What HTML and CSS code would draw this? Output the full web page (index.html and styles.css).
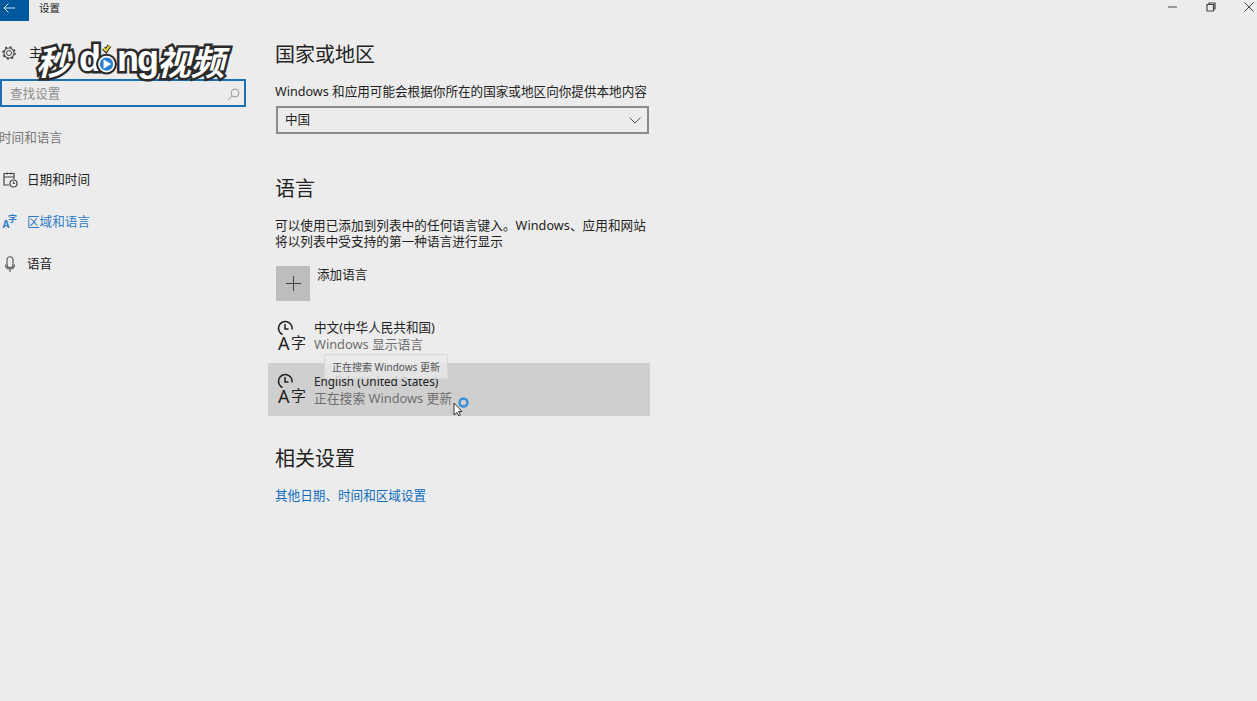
FILE: index.html
```html
<!DOCTYPE html>
<html lang="zh-CN">
<head>
  <meta charset="UTF-8" />
  <title>设置</title>
  <link rel="stylesheet" href="styles.css">
</head>
<body>
  <div class="titlebar">
    <div class="back">
      <svg width="14" height="12" viewBox="0 0 14 12" fill="none" stroke="#d5e3ef" stroke-width="1"><path d="M13 6H2M6.500 1.500 2 6l4.500 4.500"/></svg>
    </div>
    <div class="app-name">设置</div>
    <div class="win-buttons">
      <svg class="win-btn" width="10" height="10" viewBox="0 0 10 10" fill="none" stroke="#444"><path d="M0 5h9"/></svg>
      <svg class="win-btn" width="10" height="10" viewBox="0 0 10 10" fill="none" stroke="#444" stroke-width="1.200"><path d="M1 2.500h6.500V9H1zM3 2.500V1h6v6H7.500"/></svg>
      <svg class="win-btn" width="10" height="10" viewBox="0 0 10 10" fill="none" stroke="#444"><path d="M.5.500l9 9M9.500.500l-9 9"/></svg>
    </div>
  </div>

  <div class="main">
    <aside class="sidebar">
      <div class="home">
        <svg width="14" height="14" viewBox="0 0 14 14" fill="none" stroke="#444"><circle cx="7" cy="7" r="2.500"/><circle cx="7" cy="7" r="5" stroke-width="1.100"/><circle cx="7" cy="7" r="6" stroke-width="1.600" stroke-dasharray="2 2.710"/></svg>
        <span>主页</span>
      </div>
      <div class="search">
        <span>查找设置</span>
        <svg width="13" height="13" viewBox="0 0 13 13" fill="none" stroke="#999"><circle cx="8" cy="5" r="4"/><path d="M5.200 7.800 1 12"/></svg>
      </div>
      <div class="group-title">时间和语言</div>
      <nav class="nav">
        <div class="nav-item">
          <svg width="16" height="16" viewBox="0 0 16 16" fill="none" stroke="#444" stroke-width="1.200"><path d="M7 13H2V1.500h10V7M2 5h10M5 .5v2M9 .5v2"/><circle cx="11.500" cy="11.500" r="3.500"/><path d="M11.500 9.500v2h1.500"/></svg>
          <span>日期和时间</span>
        </div>
        <div class="nav-item active">
          <svg width="16" height="16" viewBox="0 0 16 16" class="nav-lang"><text class="nav-a" x="0.500" y="14">A</text><text class="nav-zi" x="6" y="8">字</text></svg>
          <span>区域和语言</span>
        </div>
        <div class="nav-item">
          <svg width="16" height="16" viewBox="0 0 16 16" fill="none" stroke="#555" stroke-width="1.100"><rect x="5" y="0.700" width="6" height="11" rx="3"/><path d="M3.500 8.500c0 6 9 6 9 0M8 13.500V16"/></svg>
          <span>语音</span>
        </div>
      </nav>
    </aside>

    <section class="content">
      <h2 class="first">国家或地区</h2>
      <p class="desc">Windows 和应用可能会根据你所在的国家或地区向你提供本地内容</p>
      <div class="select">
        <span>中国</span>
        <svg width="12" height="7" viewBox="0 0 12 7" fill="none" stroke="#555"><path d="M.5.500 6 6l5.500-5.500"/></svg>
      </div>

      <h2 class="lang-title">语言</h2>
      <p class="desc wrap">可以使用已添加到列表中的任何语言键入。Windows、应用和网站将以列表中受支持的第一种语言进行显示</p>

      <div class="add-lang">
        <div class="add-box">
          <svg width="15" height="15" viewBox="0 0 15 15" fill="none" stroke="#444"><path d="M7.500 0v15M0 7.500h15"/></svg>
        </div>
        <span>添加语言</span>
      </div>

      <div class="lang-row first-row">
        <svg class="lang-icon" width="30" height="33" viewBox="0 0 30 33" fill="none" stroke="#222" stroke-width="1.500"><path d="M6.500 15.500A6.800 6.800 0 1 1 16 10.500"/><path d="M9 5v5h3.500"/><text x="2" y="31">A</text><text x="15" y="29">字</text></svg>
        <div>
          <div class="lang-name">中文(中华人民共和国)</div>
          <div class="lang-sub">Windows 显示语言</div>
        </div>
      </div>
      <div class="lang-row selected">
        <svg class="lang-icon" width="30" height="33" viewBox="0 0 30 33" fill="none" stroke="#222" stroke-width="1.500"><path d="M6.500 15.500A6.800 6.800 0 1 1 16 10.500"/><path d="M9 5v5h3.500"/><text x="2" y="31">A</text><text x="15" y="29">字</text></svg>
        <div class="lang-text">
          <div class="lang-name lang-en">English (United States)</div>
          <div class="lang-sub">正在搜索 Windows 更新</div>
        </div>
        <div class="tooltip">正在搜索 Windows 更新</div>
        <svg class="cursor" width="18" height="20" viewBox="0 0 18 20"><circle cx="12.500" cy="5.500" r="4" fill="none" stroke="#3a8fd6" stroke-width="2.500"/><path d="M3 6v12l3-2.500 2 3.500 1.500-1-2-3.500H11z" fill="#fff" stroke="#333"/></svg>
      </div>

      <h2 class="related-title">相关设置</h2>
      <a class="link">其他日期、时间和区域设置</a>
    </section>
  </div>

  <div class="watermark"><span class="wm-cn">秒</span><span class="wm-en">d</span><span class="wm-play"><svg width="21" height="31" viewBox="0 0 25 37"><path d="M9 5l3 3 4-6" fill="none" stroke="#2b2b2b" stroke-width="5"/><path d="M9 5l3 3 4-6" fill="none" stroke="#e8d23a" stroke-width="2.500"/><circle cx="12.500" cy="24" r="12.500" fill="#2b2b2b"/><circle cx="12.500" cy="24" r="10" fill="#fff"/><circle cx="12.500" cy="24" r="8" fill="#2f7fd0"/><path d="M9 18.500v11l9-5.500z" fill="#fff"/></svg></span><span class="wm-en">ng</span><span class="wm-cn wm-last">视频</span></div>
</body>
</html>
```

FILE: styles.css
```css
* { box-sizing: border-box; }
html, body { margin: 0; height: 100%; }
body { background: #ececec; color: #222; font-family: "Noto Sans", "Noto Sans CJK SC", sans-serif; font-size: 12.6px; line-height: 16px; overflow: hidden; position: relative; }
svg { overflow: visible; }

.titlebar { display: flex; align-items: center; height: 21px; }
.back { width: 29px; height: 21px; background: #00599d; display: flex; align-items: center; padding-left: 2px; padding-bottom: 6px; }
.app-name { margin-left: 10px; font-size: 10.5px; padding-bottom: 6px; }
.win-buttons { margin-left: auto; display: flex; gap: 28px; padding: 0 3px 8px 0; }

.main { display: flex; }
.sidebar { width: 276px; flex: none; }
.home { display: flex; align-items: center; gap: 13px; height: 24px; margin-top: 20px; padding-left: 2px; }
.search { width: 246px; height: 28px; margin-top: 14px; border: 2px solid #1a6fb5; display: flex; align-items: center; justify-content: space-between; padding: 2px 4px 0 8px; color: #8f8f8f; }
.group-title { margin-top: 23px; margin-left: -1px; color: #777; }
.nav { margin-top: 13px; }
.nav-item { display: flex; align-items: center; gap: 9px; height: 42px; padding-left: 2px; }
.nav-item.active { color: #2e7cc4; }
.nav-lang text { fill: #2e7cc4; font-weight: 700; }
.nav-a { font-size: 10px; }
.nav-zi { font-size: 9px; }

.content { flex: none; width: 373px; }
h2 { font-size: 20px; font-weight: 400; line-height: 28px; margin: 0 0 0 -1px; color: #222; }
h2.first { margin-top: 20px; }
p { margin: 0 0 0 -1px; }
.desc { margin-top: 15px; white-space: nowrap; }
.desc.wrap { white-space: normal; letter-spacing: .07px; }
.select { display: flex; align-items: center; justify-content: space-between; height: 28px; margin-top: 6px; border: 2px solid #8b8b8b; padding: 0 6px 0 7px; }
.lang-title { margin-top: 41px; }
.add-lang { display: flex; align-items: flex-start; gap: 7px; margin-top: 16px; height: 34px; }
.add-box { width: 34px; height: 35px; background: #bdbdbd; display: flex; align-items: center; justify-content: center; }
.add-lang span { margin-top: 1px; }

.lang-row { display: flex; align-items: flex-start; gap: 8px; height: 53px; margin: 0 0 0 -8px; width: 382px; padding: 9px 0 0 8px; position: relative; }
.first-row { margin-top: 10px; }
.lang-row.selected { background: #cfcfcf; }
.lang-text { margin-top: 1px; }
.lang-icon { flex: none; }
.lang-icon text { fill: #222; stroke: none; }
.lang-icon text:nth-of-type(1) { font-size: 18px; }
.lang-icon text:nth-of-type(2) { font-size: 15px; }
.lang-name { line-height: 17px; }
.lang-en { font-size: 11.8px; }
.lang-sub { color: #6e6e6e; line-height: 17px; font-size: 12.8px; }

.tooltip { position: absolute; left: 56px; top: -9px; padding: 1px 7px; height: 25px; background: rgba(235,235,235,.75); border: 1px solid #d8d8d8; font-size: 10px; line-height: 22px; color: #555; white-space: nowrap; }
.cursor { position: absolute; left: 183px; top: 34px; }

.related-title { margin-top: 29px; }
.link { display: block; margin: 15px 0 0 -1px; color: #0f6cbd; }

.watermark { position: absolute; left: 36px; top: 39px; display: flex; align-items: flex-end; height: 46px; font-family: "Noto Sans CJK SC", sans-serif; font-weight: 700; font-style: italic; color: #fff; -webkit-text-stroke: 5px #2b2b2b; paint-order: stroke fill; white-space: nowrap; }
.wm-cn { font-size: 34px; line-height: 40px; letter-spacing: -.5px; margin-bottom: 4px; width: 43px; }
.wm-last { width: 68px; }
.wm-en { font-size: 36px; line-height: 40px; letter-spacing: -2px; font-family: "Liberation Sans", sans-serif; font-style: normal; font-weight: 700; margin-bottom: 6px; }
.wm-play { display: flex; margin: 0 0 10px -3px; }
```
